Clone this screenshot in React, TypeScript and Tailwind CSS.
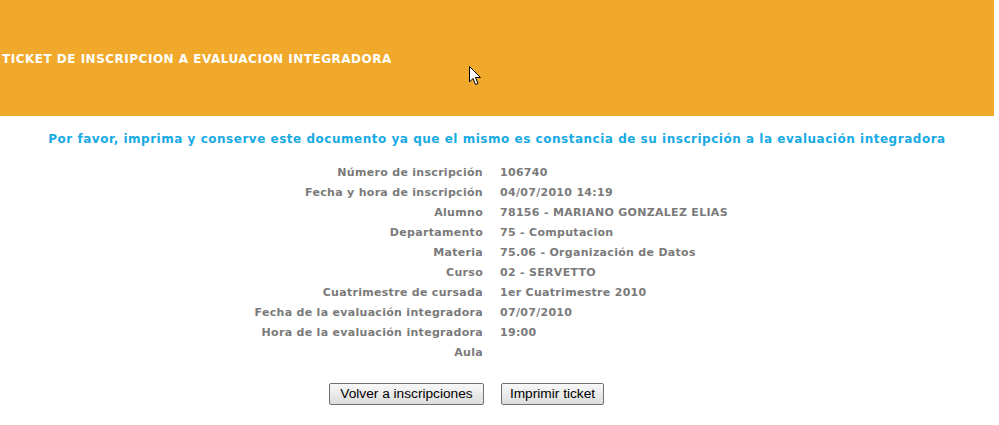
import React from "react";

const rows: [string, string][] = [
  ["Número de inscripción", "106740"],
  ["Fecha y hora de inscripción", "04/07/2010 14:19"],
  ["Alumno", "78156 - MARIANO GONZALEZ ELIAS"],
  ["Departamento", "75 - Computacion"],
  ["Materia", "75.06 - Organización de Datos"],
  ["Curso", "02 - SERVETTO"],
  ["Cuatrimestre de cursada", "1er Cuatrimestre 2010"],
  ["Fecha de la evaluación integradora", "07/07/2010"],
  ["Hora de la evaluación integradora", "19:00"],
  ["Aula", ""],
];

export default function App() {
  return (
    <div className="w-[999px] h-[425px] bg-white overflow-hidden" style={{ fontFamily: "Verdana, 'DejaVu Sans', sans-serif" }}>
      <div className="relative w-[994px] h-[116px] bg-[#f0a92b] flex items-center">
        <div className="pl-[2px] pt-[1px] text-white font-bold text-[12px] tracking-[0.5px]">TICKET DE INSCRIPCION A EVALUACION INTEGRADORA</div>
        <svg className="absolute left-[469px] top-[66px]" width="13" height="20" viewBox="0 0 13 20">
          <path d="M0.5 0.5 L0.5 16 L4 12.5 L6.5 18.5 L9 17.5 L6.5 11.5 L11.5 11.5 Z" fill="#fff" stroke="#000" strokeWidth="1" strokeLinejoin="miter" />
        </svg>
      </div>
      <div className="w-[994px] text-center pt-[14px] text-[#18aae4] font-bold text-[12px] tracking-[0.52px]">
        Por favor, imprima y conserve este documento ya que el mismo es constancia de su inscripción a la evaluación integradora
      </div>
      <div className="grid grid-cols-[483px_1fr] gap-x-[17px] mt-[15px] text-[11px] font-bold text-[#7a7a7a] tracking-[0.3px]">
        {rows.map(([l, v]) => (
          <React.Fragment key={l}>
            <div className="text-right h-[20px] leading-[20px]">{l}</div>
            <div className="h-[20px] leading-[20px]">{v}</div>
          </React.Fragment>
        ))}
      </div>
      <div className="grid grid-cols-[484px_1fr] gap-x-[17px] mt-[20px]" style={{ fontFamily: "'Liberation Sans', Arial, sans-serif" }}>
        <div className="flex justify-end">
          <button className="h-[22px] w-[155px] border border-[#707070] rounded-[2px] bg-gradient-to-b from-[#f8f8f8] to-[#dddddd] text-[13.7px] leading-none text-black">Volver a inscripciones</button>
        </div>
        <div className="flex">
          <button className="h-[22px] w-[103px] border border-[#707070] rounded-[2px] bg-gradient-to-b from-[#f8f8f8] to-[#dddddd] text-[13.7px] leading-none text-black">Imprimir ticket</button>
        </div>
      </div>
    </div>
  );
}
